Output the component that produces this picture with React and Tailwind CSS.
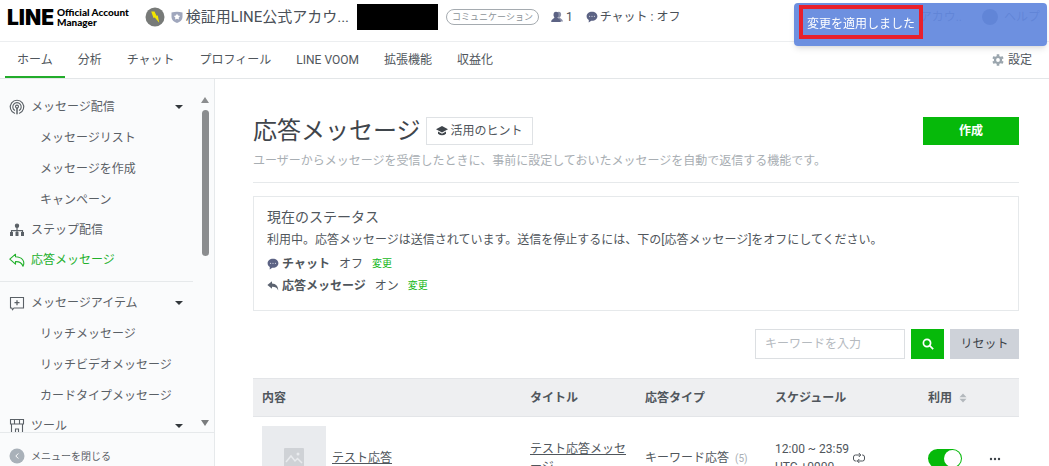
import React, { useState } from 'react';

const TABS = ['ホーム', '分析', 'チャット', 'プロフィール', 'LINE VOOM', '拡張機能', '収益化'];

const MENU = [
  { label: 'メッセージ配信', icon: BroadcastIcon, children: ['メッセージリスト', 'メッセージを作成', 'キャンペーン'] },
  { label: 'ステップ配信', icon: StepIcon },
  { label: '応答メッセージ', icon: ReplyOutlineIcon, active: true },
];

const TOOL_MENU = [
  { label: 'メッセージアイテム', icon: ItemIcon, children: ['リッチメッセージ', 'リッチビデオメッセージ', 'カードタイプメッセージ'] },
  { label: 'ツール', icon: ShopIcon, children: [] },
];

function BroadcastIcon() {
  return (
    <svg viewBox="0 0 16 16" className="h-4 w-4" fill="none" stroke="currentColor" strokeWidth="1.1" strokeLinecap="round">
      <path d="M5.6 14.2a6.7 6.7 0 1 1 4.8 0" />
      <path d="M5.6 11.3a4.2 4.2 0 1 1 4.8 0" />
      <circle cx="8" cy="7.6" r="1.5" />
      <path d="M8 9.2v5.6" strokeWidth="1.5" />
    </svg>
  );
}

function StepIcon() {
  return (
    <svg viewBox="0 0 16 16" className="h-4 w-4" fill="none" stroke="currentColor" strokeWidth="1.2">
      <circle cx="8" cy="3.8" r="1.6" fill="currentColor" />
      <path d="M8 5.5v5M2.500 10.500V8.600h11v1.900" />
      <g fill="currentColor" stroke="none">
        <rect x="1" y="10" width="3" height="4" />
        <rect x="6.5" y="10" width="3" height="4" />
        <rect x="12" y="10" width="3" height="4" />
      </g>
    </svg>
  );
}

function ReplyOutlineIcon() {
  return (
    <svg viewBox="0 0 16 16" className="h-4 w-4" fill="none" stroke="currentColor" strokeWidth="1.1" strokeLinejoin="round">
      <path d="M6.500 2.200.8 7.200l5.700 5V9.600c4-.2 6.200 1 7.500 4.600 2.400-4.800-.8-9.200-7.500-9.400Z" />
    </svg>
  );
}

function ItemIcon() {
  return (
    <svg viewBox="0 0 16 16" className="h-4 w-4" fill="none" stroke="currentColor" strokeWidth="1.1">
      <path d="M1.500 2.500h13v10.500H5l-1.500 1.700L2.800 13H1.500Z" />
      <path d="M8 5.200v5M5.500 7.700h5" strokeWidth="1.300" />
    </svg>
  );
}

function ShopIcon() {
  return (
    <svg viewBox="0 0 16 16" className="h-4 w-4" fill="none" stroke="currentColor" strokeWidth="1.1">
      <path d="M1.500 1.500h13v4.500h-13ZM5.500 1.500V6M10.500 1.500V6M2.500 6v8.500h11V6M6.500 14.500v-3.500h3v3.500" />
    </svg>
  );
}

function BubbleIcon() {
  return (
    <svg viewBox="0 0 12 12" className="h-3 w-3 text-[#5c6384]">
      <path fill="currentColor" d="M6 .8C2.900.8.6 2.700.6 5.300c0 1.600.9 2.900 2.200 3.700L2.700 11.400 5.300 9.800H6c3.100 0 5.400-1.900 5.400-4.500S9.100.8 6 .8Z" />
      <g fill="#d5d8e2">
        <circle cx="3.600" cy="5.300" r=".6" />
        <circle cx="6" cy="5.300" r=".6" />
        <circle cx="8.400" cy="5.300" r=".6" />
      </g>
    </svg>
  );
}

function ReplyIcon() {
  return (
    <svg viewBox="0 0 12 12" className="h-3 w-3 text-[#5c6370]">
      <path fill="currentColor" d="M5 1.200.400 5 5 8.800V6.800c2.900-.1 4.900.6 6.200 3.600C11.400 6.200 8.900 3.500 5 3.400Z" />
    </svg>
  );
}

function GearIcon() {
  return (
    <svg viewBox="0 0 14 14" className="h-3.5 w-3.5 text-[#9aa5ad]" fill="none" stroke="currentColor">
      <circle cx="7" cy="7" r="3" strokeWidth="2.200" />
      <path strokeWidth="2.600" d="M7 1.200v2M7 10.800v2M2 4.100l1.700 1M10.300 8.900l1.700 1M2 9.900l1.700-1M10.300 5.100l1.700-1" />
    </svg>
  );
}

function Header() {
  return (
    <header className="flex h-[42px] items-center border-b border-[#eceef0] pl-[7px] pr-[9px] pb-[7px] text-[#4a5058]">
      <a href="#" className="flex shrink-0 items-center gap-[3px] text-black">
        <span className="font-['Inter'] text-[21px] leading-none font-black">LINE</span>
        <span className="font-['Lato'] text-[10px] leading-[10px] font-black">
          Official Account<br />Manager
        </span>
      </a>
      <svg viewBox="0 0 20 20" className="ml-[16px] h-5 w-5 shrink-0">
        <circle cx="10" cy="10" r="9.500" fill="#777a78" />
        <path fill="#f3e600" d="M6.200 4.500h3.300l2 4.300 1.300-.4 1.400 7.400-4.400-5.200-1.300.4Z" />
      </svg>
      <svg viewBox="0 0 12 12" className="ml-[6px] h-3 w-3 shrink-0">
        <path fill="#a0a7bd" d="M.5 1.500Q6-.2 11.500 1.500V6c0 3-2.300 5-5.500 6C2.800 11 .5 9 .5 6Z" />
        <path fill="#fff" d="m6 2.800 1.100 1.800 2 .4-1.400 1.500.2 2.100L6 7.800l-1.900.8.2-2.100L2.900 5l2-.4Z" />
      </svg>
      <h2 className="ml-[3px] shrink-0 text-[15px]">検証用LINE公式アカウ...</h2>
      <div className="ml-[8px] h-[26px] w-[81px] shrink-0 bg-black" />
      <span className="ml-[8px] shrink-0 rounded-full border border-[#a5abb0] px-[5px] text-[9px] leading-[14px] text-[#8d9499]">
        コミュニケーション
      </span>
      <span className="ml-[12px] flex shrink-0 items-center gap-[3px] text-[12px]">
        <svg viewBox="0 0 12 12" className="h-3 w-3" fill="#5c6384">
          <ellipse cx="7.800" cy="3.600" rx="2.300" ry="2.800" fill="#8a90a8" />
          <path fill="#8a90a8" d="M7 6.500h2c.2 1.300 2.800 1.500 3 4H8Z" />
          <ellipse cx="5" cy="3.800" rx="2.500" ry="3" />
          <path d="M3.600 6h2.800c.1 1.900 3.300 1.700 3.400 4.900H.2C.3 7.700 3.500 7.900 3.600 6Z" />
        </svg>
        1
      </span>
      <span className="ml-[13px] flex shrink-0 items-center gap-[2px] text-[12px]"><BubbleIcon />チャット : オフ</span>
      <div className="ml-auto flex shrink-0 items-center text-[12px] text-[#3c4568]">
        <span>アカウ..</span>
        <span className="ml-[20px] h-4 w-4 rounded-full bg-[#3c4568]" />
        <a href="#" className="ml-[6px]">ヘルプ</a>
      </div>
    </header>
  );
}

function MenuItem({ item }) {
  const [open, setOpen] = useState(true);
  const Icon = item.icon;
  return (
    <li>
      <button
        type="button"
        onClick={() => setOpen(!open)}
        className={`flex h-[30px] w-full items-center gap-[6px] pl-[9px] pr-[18px] ${item.active ? 'text-[#22b02b]' : ''}`}
      >
        <Icon />
        {item.label}
        {item.children && <span className="ml-auto border-x-4 border-t-4 border-x-transparent border-t-[#33383c]" />}
      </button>
      {open && item.children && (
        <ul>
          {item.children.map((c) => (
            <li key={c}><a href="#" className="flex h-[31px] items-center pl-[40px]">{c}</a></li>
          ))}
        </ul>
      )}
    </li>
  );
}

function Sidebar() {
  return (
    <aside className="flex w-[215px] shrink-0 flex-col border-r border-[#e6e9eb] bg-[#fafbfc] text-[12px] text-[#5a6066]">
      <div className="flex min-h-0 flex-1 border-b border-[#e6e9eb]">
        <nav className="min-w-0 flex-1 overflow-hidden pt-[13px]">
          <ul>{MENU.map((m) => <MenuItem key={m.label} item={m} />)}</ul>
          <hr className="my-1.5 mr-2 border-[#e6e9eb]" />
          <ul>{TOOL_MENU.map((m) => <MenuItem key={m.label} item={m} />)}</ul>
        </nav>
        {/* scroll rail */}
        <div className="mr-[5px] flex w-[8px] flex-col items-center pt-[18px] pb-[6px]">
          <span className="border-x-4 border-b-[6px] border-x-transparent border-b-[#8b8d8f]" />
          <span className="mt-[7px] h-[146px] w-[7px] rounded-full bg-[#8b8d8f]" />
          <span className="mt-auto border-x-4 border-t-[6px] border-x-transparent border-t-[#7a7c7e]" />
        </div>
      </div>
      <button type="button" className="flex h-[33px] shrink-0 items-center gap-[6px] pt-[13px] pl-[9px] text-[10px]">
        <svg viewBox="0 0 16 16" className="h-4 w-4">
          <circle cx="8" cy="8" r="7.500" fill="#a9b1b9" />
          <path d="M9.300 5.500 6.800 8l2.500 2.500" fill="none" stroke="#fff" />
        </svg>
        メニューを閉じる
      </button>
    </aside>
  );
}

function StatusCard() {
  return (
    <section className="mt-[13px] border border-[#e6e9eb] px-[13px] pt-[9px] pb-[13px] text-[12px] leading-[22px] text-[#50565c]">
      <h2 className="text-[14px]">現在のステータス</h2>
      <p className="pt-[1px]">
        利用中。応答メッセージは送信されています。送信を停止するには、下の[応答メッセージ]をオフにしてください。
      </p>
      <p className="mt-[2px] flex items-center">
        <BubbleIcon />
        <b className="ml-[3px]">チャット</b>
        <span className="ml-[9px]">オフ</span>
        <a href="#" className="ml-[9px] text-[10px] text-[#18b81c]">変更</a>
      </p>
      <p className="flex items-center">
        <ReplyIcon />
        <b className="ml-[3px]">応答メッセージ</b>
        <span className="ml-[9px]">オン</span>
        <a href="#" className="ml-[9px] text-[10px] text-[#18b81c]">変更</a>
      </p>
    </section>
  );
}

function SearchBar() {
  const [keyword, setKeyword] = useState('');
  return (
    <form onSubmit={(e) => e.preventDefault()} className="mt-[18px] flex h-[30px] justify-end gap-[6px] text-[12px]">
      <input
        type="text"
        aria-label="キーワードを入力"
        placeholder="キーワードを入力"
        value={keyword}
        onChange={(e) => setKeyword(e.target.value)}
        className="w-[150px] border border-[#dcdfe2] px-[9px] placeholder:text-[#b5babf]"
      />
      <button type="submit" aria-label="検索" className="flex w-[33px] items-center justify-center bg-[#06b90a]">
        <svg viewBox="0 0 12 12" className="h-3 w-3" fill="none" stroke="#fff" strokeWidth="1.700">
          <circle cx="5" cy="5" r="3.600" />
          <path d="m7.600 7.600 3.600 3.600" />
        </svg>
      </button>
      <button type="button" onClick={() => setKeyword('')} className="w-[69px] bg-[#ced2d9] text-[#3c4248]">リセット</button>
    </form>
  );
}

function MessageTable() {
  const [enabled, setEnabled] = useState(true);
  return (
    <table className="mt-[19px] w-full table-fixed text-left text-[12px] leading-[18px] text-[#50565c]">
      <thead className="bg-[#eeeff1]">
        <tr className="h-[38px] border-y border-[#e3e5e8]">
          <th className="px-[9px]">内容</th>
          <th className="w-[115px] px-[9px]">タイトル</th>
          <th className="w-[130px] px-[9px]">応答タイプ</th>
          <th className="w-[153px] px-[9px]">スケジュール</th>
          <th className="w-[58px] pl-[9px] whitespace-nowrap">
            利用
            <svg viewBox="0 0 8 10" className="ml-[7px] inline h-2.5 w-2" fill="#b3b8bd">
              <path d="M.5 4.200 4 .5l3.500 3.700ZM.5 5.800 4 9.500l3.500-3.700Z" />
            </svg>
          </th>
          <th className="w-[42px]" />
        </tr>
      </thead>
      <tbody>
        <tr className="h-[83px] border-b border-[#e3e5e8]">
          <td className="px-[9px]">
            <div className="flex items-center gap-[6px]">
              <div className="flex h-16 w-16 items-center justify-center bg-[#e9ebee]">
                <svg viewBox="0 0 20 20" className="h-5 w-5">
                  <rect width="20" height="20" rx="1" fill="#cfd2d6" />
                  <path d="m2 14 5-6 4 5 2.500-2.500L18 15" fill="none" stroke="#e9ebee" strokeWidth="1.500" />
                  <circle cx="14" cy="6" r="1.500" fill="#e9ebee" />
                </svg>
              </div>
              <a href="#" className="underline">テスト応答</a>
            </div>
          </td>
          <td className="px-[9px]"><a href="#" className="underline">テスト応答メッセージ</a></td>
          <td className="px-[9px]">キーワード応答 <span className="ml-[3px] text-[10px] text-[#a9afb5]">(5)</span></td>
          <td className="px-[9px]">
            <div className="flex items-center gap-[3px]">
              <span>12:00 ~ 23:59<br />UTC +0900</span>
              <svg viewBox="0 0 14 12" className="h-3 w-3.5" fill="none" stroke="currentColor">
                <path d="M4.500 9H3.500a2 2 0 0 1-2-2V5a2 2 0 0 1 2-2h5M6.800 1l2 2-2 2M10 3h.5a2 2 0 0 1 2 2v2a2 2 0 0 1-2 2h-5M7.300 7l-2 2 2 2" />
              </svg>
            </div>
          </td>
          <td className="pl-[9px]">
            <button
              type="button"
              role="switch"
              aria-checked={enabled}
              aria-label="利用"
              onClick={() => setEnabled(!enabled)}
              className={`flex h-[19px] w-[34px] items-center rounded-full px-[1px] align-middle ${enabled ? 'justify-end bg-[#06b90a]' : 'bg-gray-300'}`}
            >
              <span className="h-[17px] w-[17px] rounded-full bg-white" />
            </button>
          </td>
          <td className="pr-[6px] text-center">
            <button type="button" aria-label="メニュー" className="align-middle">
              <svg viewBox="0 0 12 4" className="h-1 w-3" fill="#3c4248">
                <circle cx="2" cy="2" r="1.200" />
                <circle cx="6" cy="2" r="1.200" />
                <circle cx="10" cy="2" r="1.200" />
              </svg>
            </button>
          </td>
        </tr>
      </tbody>
    </table>
  );
}

export default function App() {
  const [tab, setTab] = useState('ホーム');

  return (
    <div className="flex h-screen flex-col overflow-hidden bg-white font-['Roboto','Noto_Sans_CJK_JP',sans-serif]">
      <Header />
      <nav className="flex h-[37px] shrink-0 items-stretch gap-px border-b border-[#e3e6e8] pl-[5px] pr-[17px] text-[12px] text-[#50565c]">
        {TABS.map((t) => (
          <button
            key={t}
            type="button"
            onClick={() => setTab(t)}
            className={`border-b-2 px-3 pt-[2px] ${t === tab ? 'border-[#22ac2b]' : 'border-transparent'}`}
          >
            {t}
          </button>
        ))}
        <a href="#" className="ml-auto flex items-center gap-[3px]"><GearIcon />設定</a>
      </nav>

      <div className="flex min-h-0 flex-1">
        <Sidebar />
        <main className="min-w-0 flex-1 overflow-hidden pt-[34px] pr-[30px] pl-[38px]">
          <div className="flex items-center">
            <h1 className="text-[24px] leading-[36px] text-[#3f454b]">応答メッセージ</h1>
            <button type="button" className="ml-[5px] flex h-[28px] items-center gap-[3px] border border-[#dfe2e5] px-[9px] text-[12px] text-[#50565c]">
              <svg viewBox="0 0 12 12" className="h-3 w-3" fill="#3f454b">
                <path d="M6 1 0 4.300 6 7.600l6-3.300ZM2 6.400v2.300Q6 12 10 8.700V6.400L6 8.700Z" />
              </svg>
              活用のヒント
            </button>
            <button type="button" className="ml-auto h-[28px] w-24 bg-[#06b90a] text-[12px] font-bold text-white">作成</button>
          </div>
          <p className="border-b border-[#e6e9eb] pt-[2px] pb-[11px] text-[12px] leading-[20px] text-[#a8aeb3]">
            ユーザーからメッセージを受信したときに、事前に設定しておいたメッセージを自動で返信する機能です。
          </p>
          <StatusCard />
          <SearchBar />
          <MessageTable />
        </main>
      </div>

      {/* toast */}
      <div role="status" className="fixed top-[3px] right-[2px] w-[253px] rounded-sm bg-[#6489de]/94 pt-[2px] pb-[7px] pl-[5px] text-[12px] text-white shadow-md">
        <span className="inline-block border-4 border-[#e8202c] px-[4px] pt-[4px] leading-[22px]">変更を適用しました</span>
      </div>
    </div>
  );
}
